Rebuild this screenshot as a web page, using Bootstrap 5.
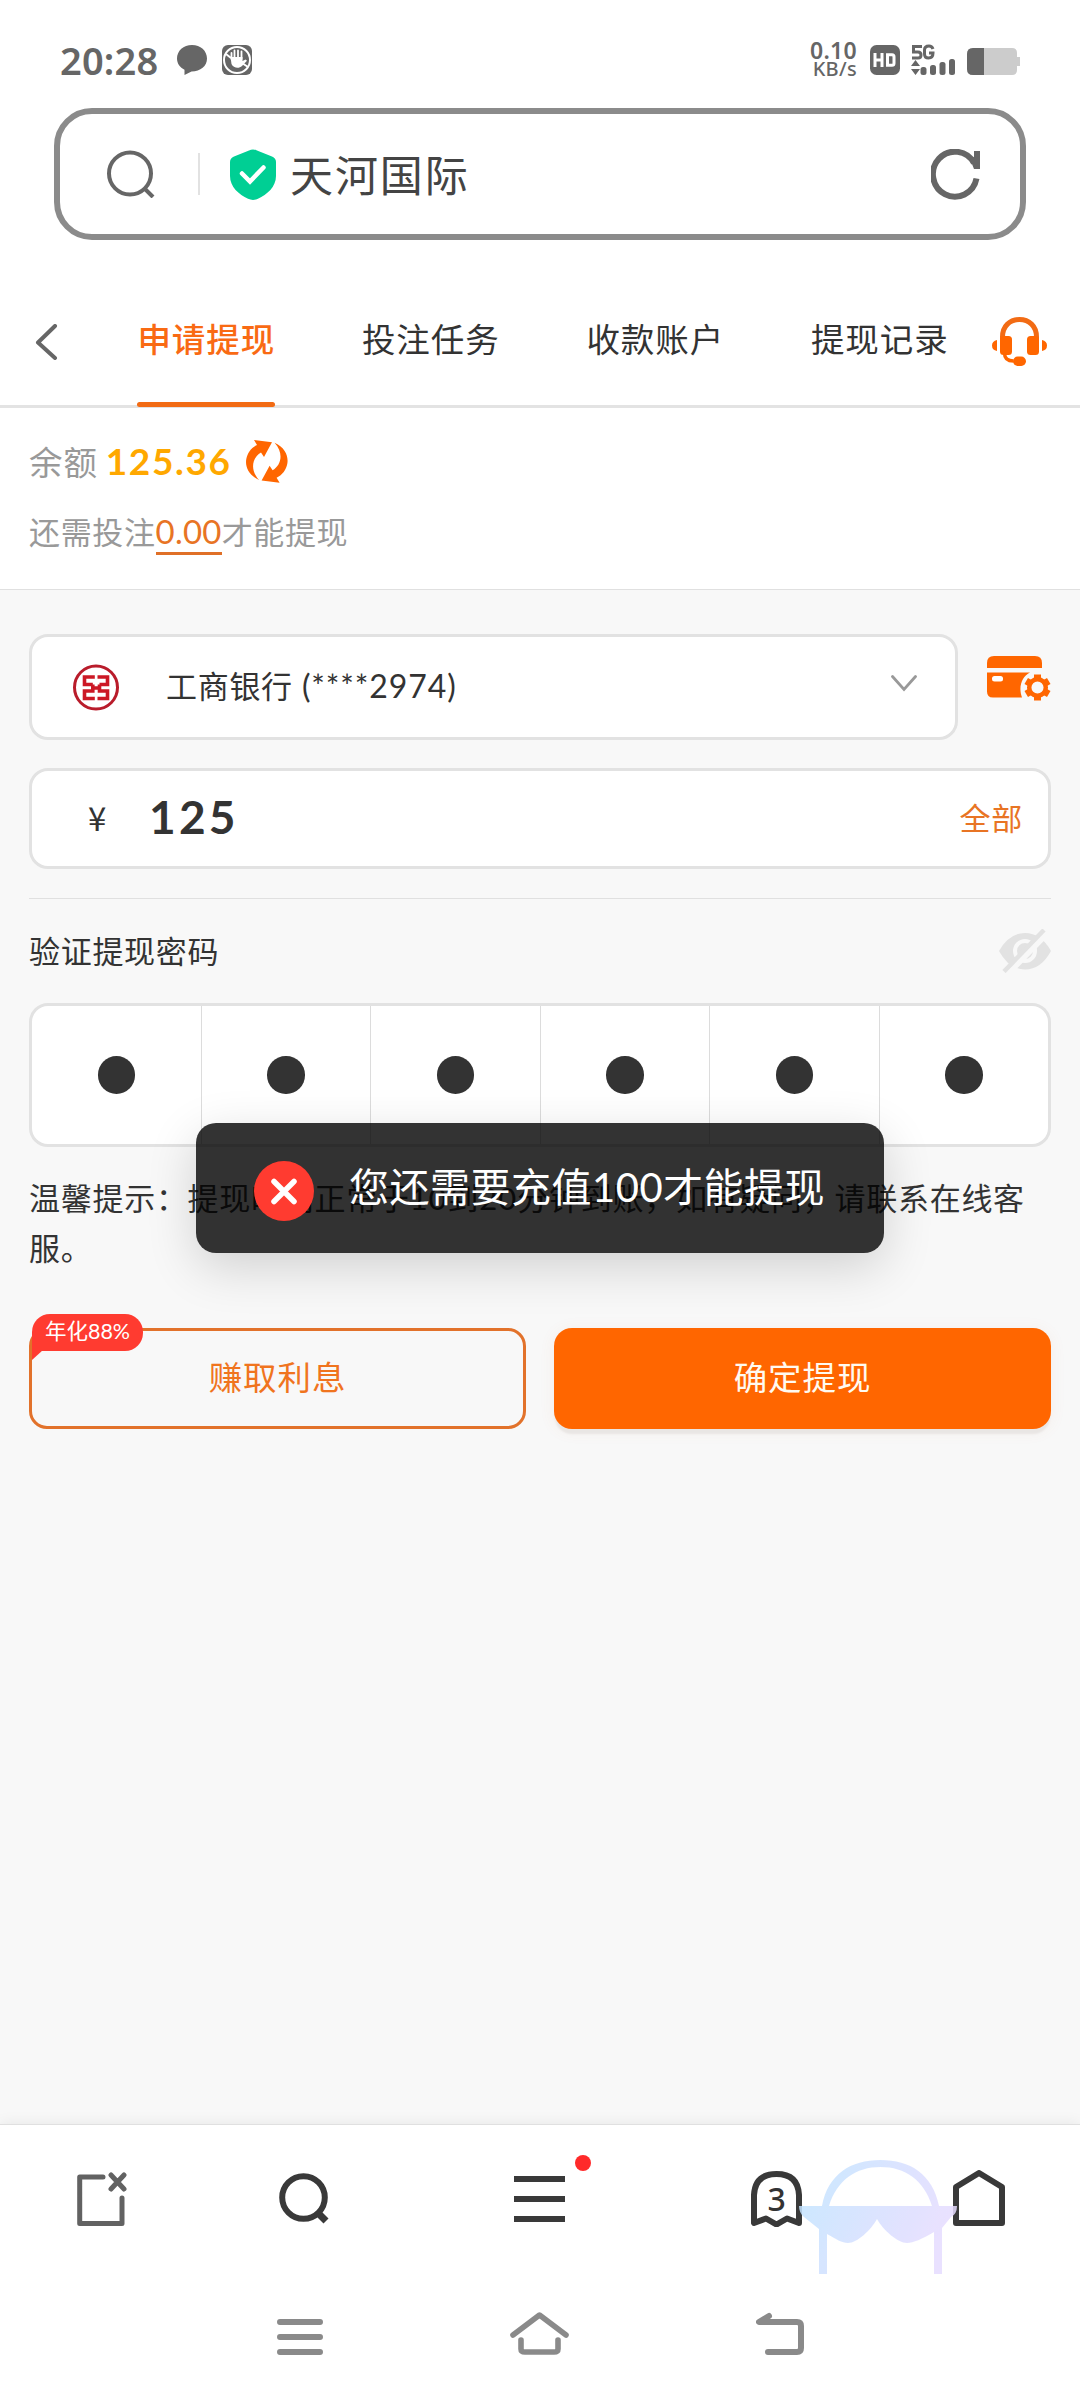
<!DOCTYPE html>
<html lang="zh-CN">
<head>
<meta charset="utf-8">
<meta name="viewport" content="width=device-width, initial-scale=1">
<title>申请提现</title>
<link href="https://cdn.jsdelivr.net/npm/bootstrap@5.3.0/dist/css/bootstrap.min.css" rel="stylesheet">
<style>
:root{--or:#ff6600;--txt:#333;--line:#e2e2e2}
body{font-family:"Noto Sans CJK SC",sans-serif;color:var(--txt);background:#f8f8f8;width:1080px;height:2400px;overflow:hidden;line-height:1}
svg{display:block;flex:none}
.num{font-family:Lato,"Noto Sans CJK SC",sans-serif}
.statusbar{height:108px;padding:12px 60px 0;color:#666}
.clock{font:600 38px/40px "Noto Sans",sans-serif;letter-spacing:.2px;width:117px}
.speed{font-family:"Noto Sans",sans-serif;font-weight:500;text-align:right;width:48px;margin-right:13px}
.speed div:first-child{font-size:23px;line-height:18px;font-weight:600;letter-spacing:.3px}
.speed div:last-child{font-size:20px;line-height:20px;letter-spacing:.3px}
.urlbox{height:132px;margin:0 54px;border:6px solid #8b8b8b;border-radius:38px;padding:0 39px 0 47px}
.site-name{font-size:43px;letter-spacing:1.9px;color:#444;line-height:60px;margin-left:14px;padding-bottom:2px}
.vbar{width:2px;height:42px;background:#e2e2e2;margin:0 30px 0 43px}
.tabs{height:300px;height:168px;border-bottom:3px solid #e3e3e3}
.tab-item{width:224.5px;height:168px;font-size:33.5px;letter-spacing:.9px;display:flex;justify-content:center;position:relative;padding-top:68px;line-height:60px}
.tab-item.active{color:#f96a13;font-weight:500}
.tab-item.active::after{content:"";position:absolute;left:43px;top:162px;width:138px;height:5px;border-radius:3px;background:#f26b14}
.balance{height:182px;border-bottom:1px solid #e0e0e0;padding:25px 29px 0;color:#999}
.need{font-size:31px;letter-spacing:.65px;line-height:44px;margin-top:18px}
.need .num{color:#e87424;border-bottom:3px solid #e07028;font-size:33px;letter-spacing:.2px;display:inline-block;line-height:44px;height:46px}
.form-area{padding:44px 29px 0}
.field{background:#fff;border:3px solid var(--line);border-radius:19px}
.bank{width:929px;height:106px;padding:0 38px 0 41px}
.bank-name{font-size:31px;letter-spacing:.7px;margin-left:47px;line-height:44px;padding-bottom:3px}
.amount{height:101px;margin-top:28px;padding:0 25px 3px 56px}
.amt{font-size:46px;font-weight:700;letter-spacing:3.2px;line-height:50px;margin-left:40px}
.rule{height:1px;background:#e0e0e0;margin-top:29px}
.pw-label{height:104px;font-size:31px;letter-spacing:.7px}
.pw{height:144px}
.pw>div{flex:1 1 0}
.pw>div+div{border-left:1px solid #dcdcdc}
.pw i{width:37.500px;height:37.500px;border-radius:50%;background:#333;margin-bottom:0}
.tips{font-size:31px;letter-spacing:.72px;line-height:47.500px;margin:26px -6px 0 0;height:96px}
.tips .num{letter-spacing:1px}
.actions{margin-top:59px;gap:28px}
.act{width:497px;height:101px;border-radius:18px;font-size:33.5px;letter-spacing:.9px;padding:0 0 5px;position:relative;display:flex;align-items:center;justify-content:center}
.act-o{border:3px solid #e2722b;color:#f0741e}
.act-f{background:var(--or);color:#fffaf0;box-shadow:0 6px 2px -1px #e9e6e4,0 2px 16px rgba(200,120,60,.08)}
.rate{position:absolute;left:0;top:-17px;width:111px;height:37px;background:#ff3b30;border-radius:18px 18px 18px 0;color:#fff;font-size:21.5px;line-height:35px;text-align:center;letter-spacing:0;font-family:Lato,"Noto Sans CJK SC",sans-serif}
.rate svg{position:absolute;left:0;top:36px}
.tst{position:absolute;left:196px;top:1123px;width:688px;height:130px;border-radius:20px;background:rgba(0,0,0,.8);color:#fff;padding:6px 0 0 58px;box-shadow:0 14px 50px rgba(0,0,0,.16);z-index:5}
.tst span{font-size:40px;letter-spacing:.5px;line-height:56px;margin-left:35px;margin-bottom:11px}
.bottombar{position:absolute;left:0;right:0;top:2124px;height:276px;background:#fff;border-top:1px solid #e0e0e0;box-shadow:0 0 14px rgba(0,0,0,.08)}
.tools{height:147px;padding:0 75px 0 77px}
.ghost{position:relative}
.ghost span{position:absolute;left:0;width:51px;top:10px;text-align:center;font:500 32px/36px "Noto Sans",sans-serif}
.wm{position:absolute;left:799px;top:35px;z-index:3}
.reddot{position:absolute;left:61px;top:-21px;width:16px;height:16px;border-radius:50%;background:#ff2a2a}
.sysnav{height:129px;padding:13px 276px 0 277px}
</style>
</head>
<body class="position-relative">
<header class="bg-white">
  <div class="statusbar d-flex align-items-start">
    <div class="d-flex align-items-center w-100" style="height:96px">
      <div class="clock">20:28</div>
      <svg width="30" height="30" viewBox="0 0 30 30" fill="#666"><path d="M15 0C6.500 0 0 5.800 0 13.500c0 5 3 9 7.500 11.300V30l7-3.500C23.500 26.500 30 21 30 13.500 30 5.800 23.500 0 15 0z"/></svg>
      <svg style="margin-left:15px" width="30" height="30" viewBox="0 0 30 30"><rect width="30" height="30" rx="6" fill="#666"/><circle cx="15" cy="15" r="13" fill="none" stroke="#fff" stroke-width="2"/><path d="M9.500 14V8M12.500 13V5.500M16 13V5.500M19.500 14V6.500" stroke="#fff" stroke-width="1.800" stroke-linecap="round"/><path d="M8.500 12h12v4l3-1.500 1.500 1.200-5 5.300c-3 2.800-8.500 2.300-10.500-2z" fill="#fff"/><path d="M4 9l5 4M20 18l6 4" stroke="#fff" stroke-width="2"/></svg>
      <div class="speed ms-auto"><div>0.10</div><div>KB/s</div></div>
      <svg width="30" height="30" viewBox="0 0 30 30"><rect width="30" height="30" rx="6.500" fill="#666"/><path d="M5 8v14M12 8v14M5 15h7M17.500 9.700h4.500q2 0 2 2v6.600q0 2-2 2h-4.500z" fill="none" stroke="#fff" stroke-width="3"/></svg>
      <svg style="margin-left:11px" width="45" height="32" viewBox="0 0 45 32" fill="#666"><path d="M11 2.500H2.500V8H7q3 0 3 3t-3 3H1" fill="none" stroke="#666" stroke-width="3"/><path d="M22 5q-1-3-4-3-4.500 0-4.500 4v4q0 4 4 4 4.500 0 4.500-5h-4" fill="none" stroke="#666" stroke-width="3"/><path d="M0 22l4.500-6 4.500 6zM0 25h9l-4.500 6z"/><rect x="9.500" y="23" width="6" height="8" rx="2.500"/><rect x="19" y="21" width="6" height="10" rx="2.500"/><rect x="28.500" y="18" width="6" height="13" rx="2.500"/><rect x="38" y="15" width="6" height="16" rx="2.500"/></svg>
      <svg style="margin:2px 0 0 11px" width="53" height="27" viewBox="0 0 53 27"><path d="M6 0h39q5 0 5 5v4h3v9h-3v4q0 5-5 5H6q-6 0-6-6V6q0-6 6-6z" fill="#ccc"/><path d="M17 0H6Q0 0 0 6v15q0 6 6 6h11z" fill="#666"/></svg>
    </div>
  </div>
  <div class="urlbox d-flex align-items-center">
    <svg width="48" height="48" viewBox="0 0 48 48" fill="none" stroke="#666" stroke-width="4"><circle cx="23" cy="23.500" r="21"/><path d="M37.500 38.500l8.500 8.500"/></svg>
    <div class="vbar"></div>
    <svg width="46" height="51" viewBox="0 0 46 51"><path d="M19 1.500q4-2 8 0l15 6q4 1.500 4 5.500v14c0 11-9 18.500-18 22.800q-5 2.200-10 0C9 45.500 0 38 0 27V13q0-4 4-5.500z" fill="#00cf94"/><path d="M12 24.500l8 8L33.500 18.500" stroke="#fff" stroke-width="4.500" fill="none" stroke-linecap="round"/></svg>
    <div class="site-name">天河国际</div>
    <svg class="ms-auto" width="50" height="51" viewBox="0 0 50 51" fill="none" stroke="#666" stroke-width="6"><path d="M45.500 29.500A22 22.500 0 1 1 43 14"/><path d="M43 2h6v18h-6l-4-10 4-2z" fill="#666" stroke="none"/></svg>
  </div>
  <nav class="tabs d-flex align-items-start">
    <svg style="margin:84px 0 0 35px" width="24" height="36" viewBox="0 0 24 36" fill="none" stroke="#666" stroke-width="4" stroke-linecap="round" stroke-linejoin="round"><path d="M20 2L3 18.500 20 34"/></svg>
    <div class="d-flex" style="margin-left:35px">
      <div class="tab-item active">申请提现</div><div class="tab-item">投注任务</div><div class="tab-item">收款账户</div><div class="tab-item">提现记录</div>
    </div>
    <svg style="margin-top:77px" width="55" height="49" viewBox="0 0 55 49" fill="#ff6600"><path d="M10.500 26V20C10.500 9 18 2.500 27.500 2.500S44.500 9 44.500 20v6" fill="none" stroke="#f26b14" stroke-width="5"/><rect x="8" y="19" width="12" height="19" rx="3.500"/><rect x="35" y="19" width="12" height="19" rx="3.500"/><path d="M5 23v11Q0 33 0 28.500T5 23zM50 23v11q5-1 5-5.500T50 23z"/><path d="M12.500 36q0 8 9 8" fill="none" stroke="#ff6600" stroke-width="3.500"/><rect x="21" y="39.500" width="13" height="9.500" rx="4.700"/></svg>
  </nav>
  <section class="balance">
    <div class="d-flex align-items-center" style="height:58px">
      <span style="font-size:33.5px;letter-spacing:.9px;line-height:50px;padding-bottom:3px">余额</span>
      <span class="num fw-bold" style="font-size:37px;letter-spacing:1.6px;color:#ffa800;margin-left:8px;line-height:50px;padding-bottom:2px">125.36</span>
      <svg style="margin-left:14px;margin-top:-2px" width="42" height="43" viewBox="0 0 42 43" fill="#ff6600"><path id="ar" d="M8 0L26 2.300 18 17 15 12.500C7 17 3 29 13 40 2 35-1 26 .3 19 1.500 13 5 8 11 5z"/><use href="#ar" transform="rotate(180 20.800 21.400)"/></svg>
    </div>
    <div class="need d-flex"><span>还需投注</span><span class="num">0.00</span><span>才能提现</span></div>
  </section>
</header>

<main class="form-area">
  <div class="d-flex justify-content-between">
    <div class="field bank d-flex align-items-center">
      <svg width="46" height="47" viewBox="0 0 46 47" fill="none" stroke="#b91c2b"><circle cx="23" cy="23.500" r="21.500" stroke-width="3"/><path d="M21.500 13.500H11.500v6.800H19.500v7H11.500v7.200H21.500M24.500 13.500H34.500v6.800H26.500v7H34.500v7.200H24.500M19.500 17h7M19.500 31h7" stroke="none"/><path d="M21.800 13H11.500v7.500h8.300M21.800 34.500H11.500V27h8.300v-6.500M24.500 13h10v7.500h-8M24.500 34.500h10V27h-8v-6.500M19.800 24h6.500" stroke-width="3.600" stroke="#cc1825"/></svg>
      <span class="bank-name">工商银行<span class="num" style="font-size:32px;letter-spacing:.9px"> (****2974)</span></span>
      <svg class="ms-auto" style="margin-bottom:8px" width="26" height="17" viewBox="0 0 26 17" fill="none" stroke="#999" stroke-width="2.800" stroke-linecap="round"><path d="M1.500 1.500L13 14.500 24.500 1.500"/></svg>
    </div>
    <svg style="margin-top:22px" width="64" height="46" viewBox="0 0 64 46" fill="#ff6600"><path d="M7 0h41q7 0 7 7v5H0V7q0-7 7-7zM0 16.500h43c-8 4-12 14-8 25H6q-6 0-6-6z"/><rect x="5" y="20" width="11" height="5.500" rx="2.500" fill="#fff"/><g transform="translate(50.500 31.500)"><circle r="8.300" fill="none" stroke="#ff6600" stroke-width="4.500"/><g id="g"><rect x="-3.500" y="-13" width="7" height="5"/><rect x="-3.500" y="8" width="7" height="5"/></g><use href="#g" transform="rotate(60)"/><use href="#g" transform="rotate(120)"/></g></svg>
  </div>
  <div class="field amount d-flex align-items-center">
    <span style="font-size:33px;width:21px;line-height:44px">¥</span>
    <span class="num amt">125</span>
    <span class="ms-auto" style="color:#e87424;font-size:31px;letter-spacing:.7px;line-height:44px">全部</span>
  </div>
  <div class="rule"></div>
  <div class="pw-label d-flex align-items-center justify-content-between">
    <span style="padding-bottom:3px">验证提现密码</span>
    <svg width="52" height="44" viewBox="0 0 52 44"><path d="M0 22Q10 4 26 4t26 18Q42 40.500 26 40.500T0 22z" fill="#e2e2e2"/><circle cx="26" cy="22" r="10" fill="none" stroke="#f8f8f8" stroke-width="4"/><path d="M8 44L49 2" stroke="#f8f8f8" stroke-width="8"/><path d="M5 42.500L45 1" stroke="#e2e2e2" stroke-width="4.500"/></svg>
  </div>
  <div class="field pw d-flex">
    <div class="d-flex align-items-center justify-content-center"><i></i></div>
    <div class="d-flex align-items-center justify-content-center"><i></i></div>
    <div class="d-flex align-items-center justify-content-center"><i></i></div>
    <div class="d-flex align-items-center justify-content-center"><i></i></div>
    <div class="d-flex align-items-center justify-content-center"><i></i></div>
    <div class="d-flex align-items-center justify-content-center"><i></i></div>
  </div>
  <p class="tips">温馨提示：提现时间正常于<span class="num">10</span>到<span class="num">20</span>分钟到账，如有疑问，请联系在线客<br>服。</p>
  <div class="actions d-flex">
    <div class="act act-o">赚取利息<span class="rate">年化88%<svg width="11" height="11" viewBox="0 0 11 11"><path d="M0 0h11L0 10z" fill="#ff3b30"/></svg></span></div>
    <div class="act act-f">确定提现</div>
  </div>
</main>

<div class="tst d-flex align-items-center">
  <svg width="60" height="60" viewBox="0 0 60 60"><circle cx="30" cy="30" r="30" fill="#ff3b30"/><path d="M20 20.500l20 20M40 20.500l-20 20" stroke="#fff" stroke-width="5.500" stroke-linecap="round"/></svg>
  <span>您还需要充值<span class="num m-0">100</span>才能提现</span>
</div>

<footer class="bottombar">
  <div class="tools d-flex align-items-center justify-content-between position-relative">
    <svg width="50" height="54" viewBox="0 0 50 54" fill="none" stroke="#626262" stroke-width="5" stroke-linecap="round" stroke-linejoin="round"><path d="M26 5H2.700v46.500H45V26M34 3l13 14M47 3L34 17"/></svg>
    <svg style="margin-left:1px" width="51" height="52" viewBox="0 0 51 52" fill="none" stroke="#393939" stroke-width="6"><circle cx="24.500" cy="24.500" r="21.300"/><path d="M39 40l8 8" stroke-width="7"/></svg>
    <div class="position-relative" style="margin-left:33px"><svg width="51" height="46" viewBox="0 0 51 46" fill="#393939"><path d="M0 0h51v6H0zM0 20h51v6H0zM0 40h51v6H0z"/></svg><span class="reddot"></span></div>
    <div class="ghost" style="margin-left:36px"><svg width="51" height="56" viewBox="0 0 51 56" fill="none" stroke="#393939" stroke-width="6" stroke-linejoin="round"><path d="M3 52V24Q4 3 25.500 3T48 24v28L36 47.500l-10.500 6L15 47.500z"/></svg><span>3</span></div>
    <svg width="52" height="57" viewBox="0 0 52 57" fill="none" stroke="#393939" stroke-width="6" stroke-linejoin="round"><path d="M3 17L26 3l23 14v36H3z"/></svg>
  </div>
  <svg class="wm" width="158" height="114" viewBox="0 0 158 114" opacity=".85"><defs><linearGradient id="wg" x2="1" y2=".35"><stop offset="0" stop-color="#bfe5ff"/><stop offset="1" stop-color="#e6dcff"/></linearGradient></defs><path d="M23 46C29 14 52 0 81.500 0s52 14 58.500 46h-7C125 20 106 7 81.500 7S38 20 30 46zM0 46h158q0 8-6 11l-9 11v46h-8V72c-12 7-21 11-27 11-9 0-24-13-30-24-6 11-20 24-29 24-6 0-12-4-21-9v40h-8V69L5 57Q0 53 0 46z" fill="url(#wg)"/></svg>
  <div class="sysnav d-flex align-items-start justify-content-between">
    <svg style="margin-top:33px" width="46" height="38" viewBox="0 0 46 38" stroke="#8a8a8a" stroke-width="6" stroke-linecap="round"><path d="M3 4h40M3 19h40M3 34h40"/></svg>
    <svg style="margin-top:26px" width="59" height="45" viewBox="0 0 59 45" fill="none" stroke="#8a8a8a" stroke-width="5.600" stroke-linecap="round" stroke-linejoin="round"><path d="M3 24L29.500 4 56 24M11 29v9q0 3 4 3h29q4 0 4-3v-9"/></svg>
    <svg style="margin-top:26px" width="48" height="45" viewBox="0 0 48 45" fill="none" stroke="#8a8a8a" stroke-width="6" stroke-linecap="round" stroke-linejoin="round"><path d="M13 5L3 11h38q4 0 4 4v22q0 4-4 4H12"/></svg>
  </div>
</footer>
<script src="https://cdn.jsdelivr.net/npm/bootstrap@5.3.0/dist/js/bootstrap.bundle.min.js"></script>
</body>
</html>
